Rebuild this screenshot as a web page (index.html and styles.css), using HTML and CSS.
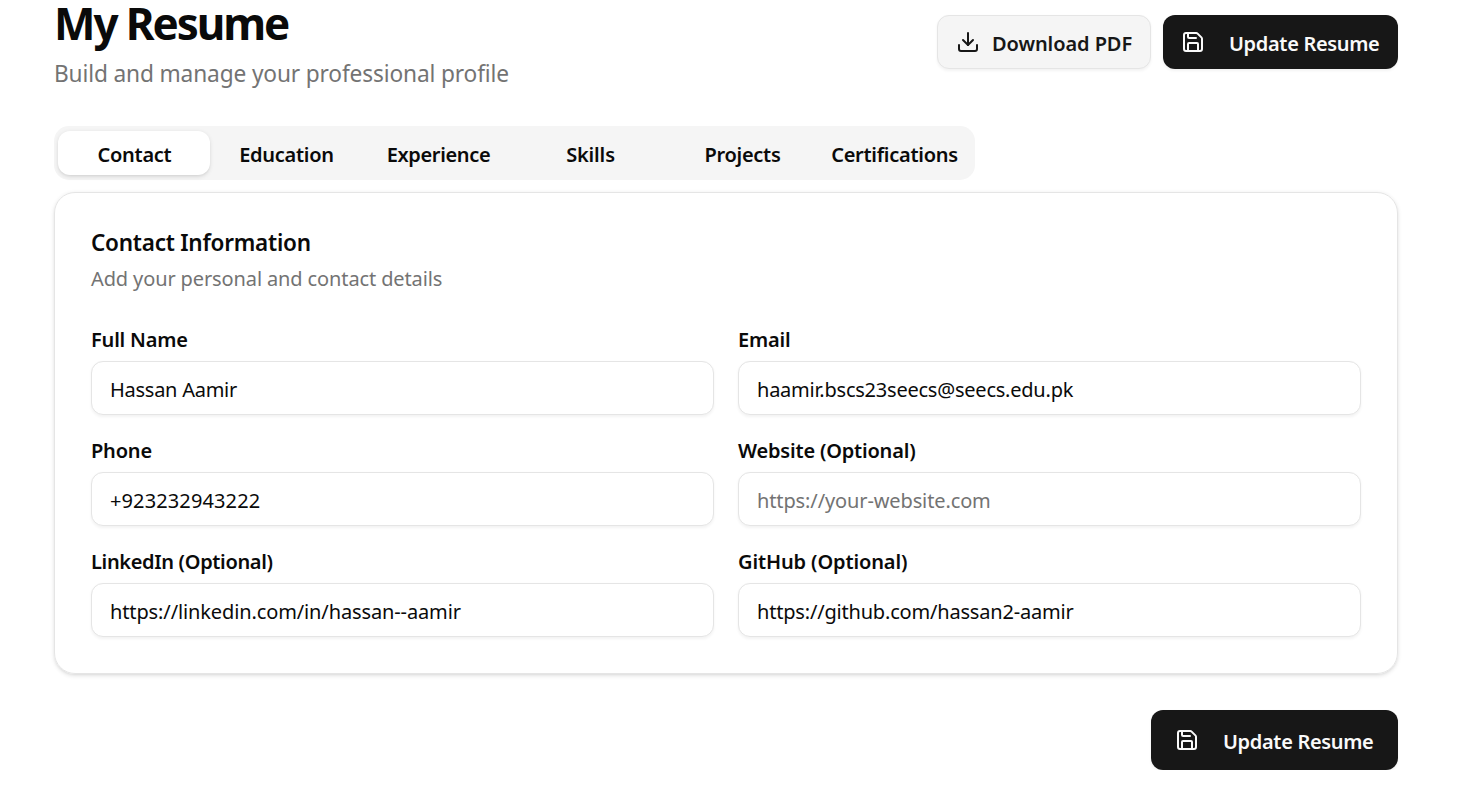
FILE: index.html
```
<!DOCTYPE html>
<html lang="en">
<head>
<meta charset="utf-8">
<title>My Resume</title>
<link rel="stylesheet" href="styles.css">
</head>
<body>
<svg class="sprite" aria-hidden="true">
  <symbol id="save" viewBox="0 0 24 24"><path d="M15.2 3a2 2 0 0 1 1.4.6l3.8 3.8a2 2 0 0 1 .6 1.4V19a2 2 0 0 1-2 2H5a2 2 0 0 1-2-2V5a2 2 0 0 1 2-2z"/><path d="M17 21v-7a1 1 0 0 0-1-1H8a1 1 0 0 0-1 1v7"/><path d="M7 3v4a1 1 0 0 0 1 1h7"/></symbol>
  <symbol id="download" viewBox="0 0 24 24"><path d="M12 15V3"/><path d="M21 15v4a2 2 0 0 1-2 2H5a2 2 0 0 1-2-2v-4"/><path d="m7 10 5 5 5-5"/></symbol>
</svg>
<main class="page">
  <header class="header">
    <div class="heading">
      <h1 class="title">My Resume</h1>
      <p class="subtitle">Build and manage your professional profile</p>
    </div>
    <div class="actions">
      <button class="btn btn-secondary"><svg class="icon"><use href="#download"/></svg><span>Download PDF</span></button>
      <button class="btn btn-primary"><svg class="icon"><use href="#save"/></svg><span class="btn-label">Update Resume</span></button>
    </div>
  </header>
  <nav class="tabs">
    <button class="tab active">Contact</button>
    <button class="tab">Education</button>
    <button class="tab tab-experience">Experience</button>
    <button class="tab tab-skills">Skills</button>
    <button class="tab">Projects</button>
    <button class="tab">Certifications</button>
  </nav>
  <section class="card">
    <h2 class="card-title">Contact Information</h2>
    <p class="card-desc">Add your personal and contact details</p>
    <form class="fields">
      <div class="field"><label class="label" for="name">Full Name</label><input class="input input-name" id="name" value="Hassan Aamir"></div>
      <div class="field"><label class="label" for="email">Email</label><input class="input input-email" id="email" value="haamir.bscs23seecs@seecs.edu.pk"></div>
      <div class="field"><label class="label" for="phone">Phone</label><input class="input input-phone" id="phone" value="+923232943222"></div>
      <div class="field"><label class="label" for="website">Website (Optional)</label><input class="input" id="website" placeholder="https://your-website.com"></div>
      <div class="field"><label class="label label-linkedin" for="linkedin">LinkedIn (Optional)</label><input class="input" id="linkedin" value="https://linkedin.com/in/hassan--aamir"></div>
      <div class="field"><label class="label label-github" for="github">GitHub (Optional)</label><input class="input input-github" id="github" value="https://github.com/hassan2-aamir"></div>
    </form>
  </section>
  <footer class="footer">
    <button class="btn btn-primary btn-large"><svg class="icon"><use href="#save"/></svg><span class="btn-label">Update Resume</span></button>
  </footer>
</main>
</body>
</html>
```

FILE: styles.css
```
* { box-sizing: border-box; }
html { overflow: hidden; }
body {
  margin: 0;
  background: #fff;
  color: #0a0a0a;
  font-family: "Noto Sans", sans-serif;
  font-size: 20px;
}
h1, h2, p { margin: 0; }
button, input { font: inherit; color: inherit; }
.sprite { display: none; }
.page { width: 1344px; margin-left: 54px; }

.header { display: flex; justify-content: space-between; height: 90px; }
.title {
  font-size: 44px;
  line-height: 46px;
  font-weight: 700;
  letter-spacing: -2.1px;
}
.subtitle {
  color: #737373;
  font-size: 22.7px;
  line-height: 36px;
  margin-top: 10px;
  letter-spacing: -0.14px;
}
.heading { white-space: nowrap; }
.actions { display: flex; gap: 12px; padding-top: 15px; }

.btn {
  display: flex;
  align-items: center;
  gap: 12px;
  height: 54px;
  padding: 0 18px;
  border: 0;
  border-radius: 12px;
  font-weight: 600;
  white-space: nowrap;
  box-shadow: 0 1.5px 3px rgba(0, 0, 0, 0.05);
}
.btn span { padding-top: 2px; }
.btn-secondary {
  width: 214px;
  background: #f5f5f5;
  border: 1px solid #e5e5e5;
  color: #171717;
  letter-spacing: -0.08px;
}
.btn-primary { width: 235px; background: #171717; color: #fafafa; }
.btn-label { margin-left: 12px; letter-spacing: -0.33px; }
.btn-large { width: 247px; height: 60px; padding: 0 24px; }
.icon {
  flex: none;
  width: 24px;
  height: 24px;
  fill: none;
  stroke: currentColor;
  stroke-width: 2;
  stroke-linecap: round;
  stroke-linejoin: round;
}

.tabs {
  display: grid;
  grid-template-columns: repeat(6, 152px);
  width: 921px;
  height: 54px;
  margin-top: 36px;
  padding: 5px 4px;
  border-radius: 15px;
  background: #f5f5f5;
}
.tab {
  height: 44px;
  padding: 2px 0 0 1px;
  border: 0;
  border-radius: 12px;
  background: none;
  font-weight: 600;
  letter-spacing: -0.27px;
}
.tab-experience { letter-spacing: -0.36px; }
.tab-skills { letter-spacing: -0.15px; }
.active {
  background: #fff;
  box-shadow: 0 1.5px 4.5px rgba(0, 0, 0, 0.1), 0 1.5px 3px -1.5px rgba(0, 0, 0, 0.1);
}

.card {
  height: 482px;
  margin-top: 12px;
  padding: 36px;
  border: 1px solid #e5e5e5;
  border-radius: 21px;
  box-shadow: 0 1.5px 4.5px rgba(0, 0, 0, 0.1), 0 1.5px 3px -1.5px rgba(0, 0, 0, 0.1);
}
.card-title {
  font-size: 22.5px;
  line-height: 27px;
  font-weight: 600;
  letter-spacing: -0.24px;
}
.card-desc {
  margin-top: 8px;
  line-height: 30px;
  color: #737373;
  letter-spacing: -0.12px;
}
.fields {
  display: grid;
  grid-template-columns: 1fr 1fr;
  gap: 24px;
  margin-top: 34px;
}
.field { display: flex; flex-direction: column; gap: 12px; }
.label { height: 21px; line-height: 23px; font-weight: 600; letter-spacing: -0.19px; }
.label-linkedin { letter-spacing: -0.34px; }
.label-github { letter-spacing: -0.12px; }
.input {
  width: 100%;
  height: 54px;
  padding: 3px 18px 0;
  border: 1px solid #e5e5e5;
  border-radius: 12px;
  background: #fff;
  letter-spacing: -0.12px;
  outline: 0;
  box-shadow: 0 1.5px 3px rgba(0, 0, 0, 0.05);
}
.input::placeholder { color: #737373; opacity: 1; }
.input-name { letter-spacing: -0.26px; }
.input-email { letter-spacing: -0.23px; }
.input-phone { letter-spacing: 0.12px; }
.input-github { letter-spacing: -0.19px; }

.footer { display: flex; justify-content: flex-end; margin-top: 36px; }
```
